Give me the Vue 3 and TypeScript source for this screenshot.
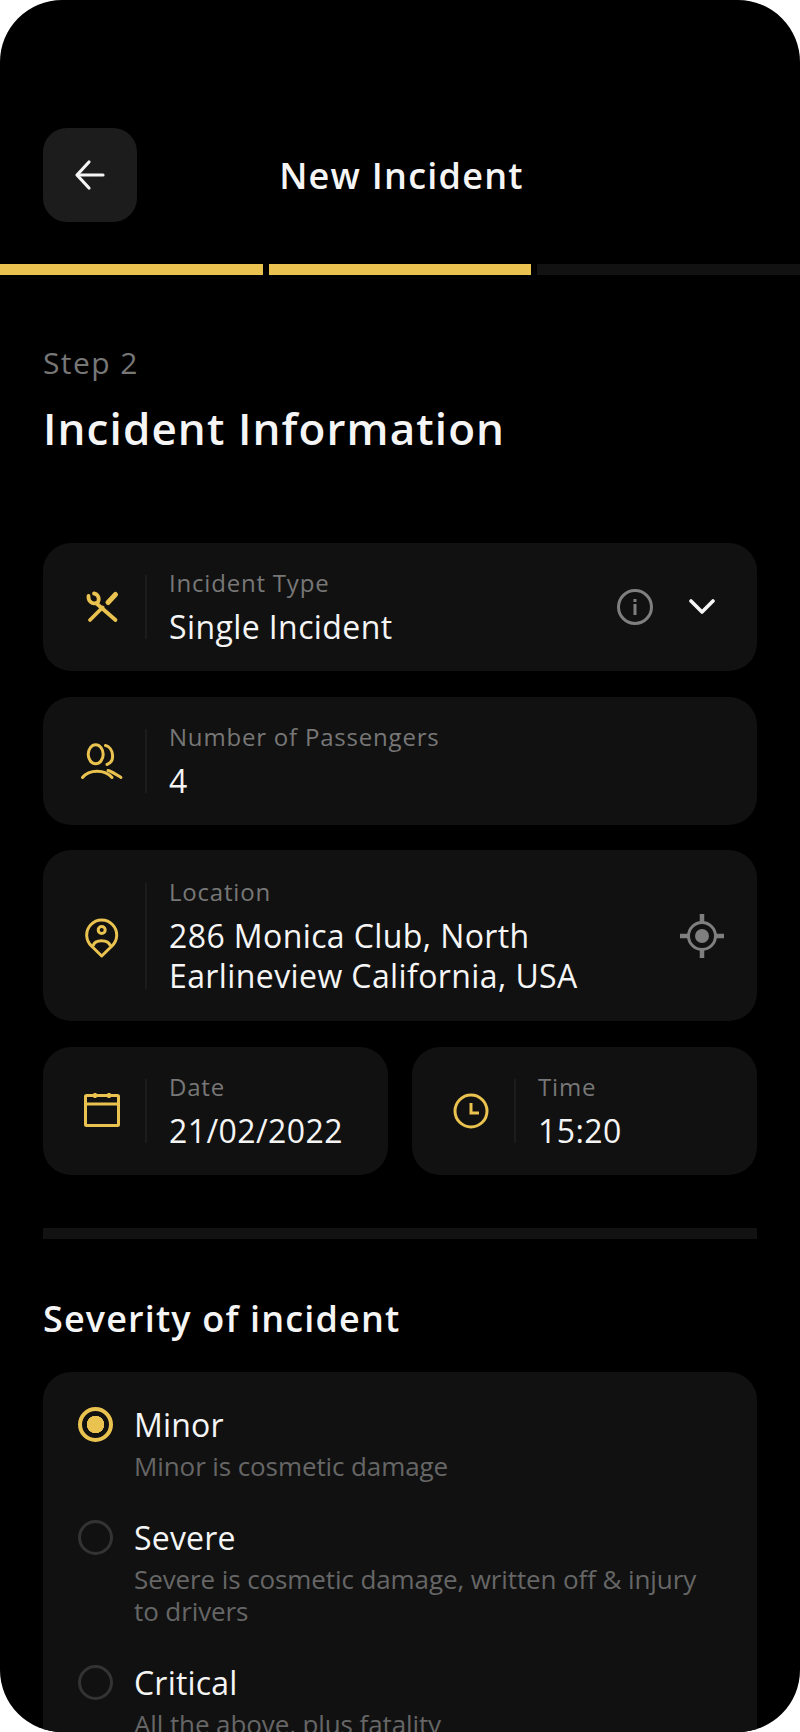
<script setup lang="ts">
interface Severity {
  name: string
  text: string
  checked: boolean
}

const severities: Severity[] = [
  { name: 'Minor', text: 'Minor is cosmetic damage', checked: true },
  { name: 'Severe', text: 'Severe is cosmetic damage, written off & injury to drivers', checked: false },
  { name: 'Critical', text: 'All the above, plus fatality', checked: false },
]
</script>

<template>
  <div class="screen">
    <header class="top">
      <button class="back" type="button">
        <svg width="34" height="34" viewBox="0 0 34 34" fill="none" stroke="#f5f5f5" stroke-width="3.2" stroke-linecap="round" stroke-linejoin="round">
          <path d="M30 17H5" />
          <path d="M16 4 4 17l12 13" />
        </svg>
      </button>
      <h1>New Incident</h1>
    </header>

    <div class="progress">
      <span class="on"></span>
      <span class="on"></span>
      <span></span>
    </div>

    <main class="content">
      <p class="step">Step 2</p>
      <h2>Incident Information</h2>

      <div class="fields">
        <div class="card">
          <span class="ico">
            <svg width="36" height="36" viewBox="13 9 36 36" fill="none" stroke="#e9c24f" stroke-width="3.800" stroke-linecap="round" stroke-linejoin="round">
              <path d="M17.500 16C17 21 21 24.500 25 23L44.500 40" />
              <path d="M23 13.500C26.500 14 29 18 27 22" />
              <path d="M19 40 31.500 27.500" />
              <path d="M37 22.500 44.500 14.500" stroke-width="5" />
            </svg>
          </span>
          <div class="text">
            <span class="label">Incident Type</span>
            <span class="value">Single Incident</span>
          </div>
          <svg class="info" width="36" height="36" viewBox="0 0 36 36" fill="none">
            <circle cx="18" cy="18" r="16.500" stroke="#7f7f7f" stroke-width="3" />
            <rect x="16.500" y="15" width="3" height="11" fill="#7f7f7f" />
            <rect x="16.500" y="10" width="3" height="3" fill="#7f7f7f" />
          </svg>
          <svg class="chev" width="26" height="18" viewBox="0 0 26 18" fill="none" stroke="#f5f5f5" stroke-width="3.600" stroke-linecap="round" stroke-linejoin="round">
            <path d="M2 3l11 11L24 3" />
          </svg>
        </div>

        <div class="card">
          <span class="ico">
            <svg width="46" height="40" viewBox="10 6 46 40" fill="none" stroke="#e9c24f" stroke-width="3" stroke-linecap="round">
              <ellipse cx="26.700" cy="19.300" rx="7.500" ry="9.500" />
              <path d="M36.500 10.500C44 12 47 26 38 29.500" />
              <path d="M13.500 42.500C20 34 36 34 43 42.500" />
              <path d="M39 35.500C44 37 48 40 52 42.500" />
            </svg>
          </span>
          <div class="text">
            <span class="label">Number of Passengers</span>
            <span class="value">4</span>
          </div>
        </div>

        <div class="card tall">
          <span class="ico">
            <svg width="36" height="44" viewBox="14 4 36 44" fill="none" stroke="#e9c24f" stroke-width="3" stroke-linejoin="round">
              <path d="M31.700 46 22 36.500A15 15 0 1 1 41.400 36.500Z" />
              <circle cx="31.700" cy="20" r="3.500" />
              <path d="M23 36C25 29 38 29 40.500 36" />
            </svg>
          </span>
          <div class="text">
            <span class="label">Location</span>
            <span class="value">286 Monica Club, North<br />Earlineview California, USA</span>
          </div>
          <svg class="target" width="44" height="44" viewBox="0 0 44 44" fill="none" stroke="#7f7f7f" stroke-width="3">
            <circle cx="22" cy="22" r="13.500" />
            <circle cx="22" cy="22" r="7" fill="#7f7f7f" stroke="none" />
            <path d="M22 0v9M22 35v9M0 22h9M35 22h9" stroke-width="4.500" />
          </svg>
        </div>

        <div class="pair">
          <div class="card">
            <span class="ico">
              <svg width="36" height="36" viewBox="0 2 36 36" fill="none" stroke="#e9c24f" stroke-width="3">
                <rect x="1.500" y="4.500" width="33" height="30" rx="1" />
                <path d="M1.500 13h33" />
                <path d="M11 1v6M25 1v6" />
              </svg>
            </span>
            <div class="text">
              <span class="label">Date</span>
              <span class="value">21/02/2022</span>
            </div>
          </div>
          <div class="card">
            <span class="ico">
              <svg width="36" height="36" viewBox="0 0 36 36" fill="none" stroke="#e9c24f" stroke-width="3">
                <circle cx="18" cy="18" r="16" />
                <path d="M18 10V20h8" />
              </svg>
            </span>
            <div class="text">
              <span class="label">Time</span>
              <span class="value">15:20</span>
            </div>
          </div>
        </div>
      </div>

      <div class="rule"></div>

      <h3>Severity of incident</h3>

      <div class="severity">
        <div v-for="s in severities" :key="s.name" class="option">
          <span class="radio" :class="{ checked: s.checked }"></span>
          <div class="opt-body">
            <div class="opt-name">{{ s.name }}</div>
            <div class="opt-text">{{ s.text }}</div>
          </div>
        </div>
      </div>
    </main>
  </div>
</template>

<style scoped>
.screen {
  width: 800px;
  height: 1732px;
  background: #000;
  border-radius: 62px;
  overflow: hidden;
  box-sizing: border-box;
  padding-top: 128px;
  font-family: "Open Sans", "Noto Sans", sans-serif;
  color: #f5f5f5;
}

.top {
  display: grid;
  grid-template-columns: 94px 1fr 94px;
  align-items: center;
  padding: 0 43px;
}

.back {
  width: 94px;
  height: 94px;
  background: #1c1c1c;
  border: 0;
  border-radius: 24px;
  padding: 0;
  display: flex;
  align-items: center;
  justify-content: center;
}

h1 {
  margin: 0;
  padding-left: 3px;
  font-size: 36px;
  font-weight: 600;
  letter-spacing: 1.25px;
  text-align: center;
}

.progress {
  display: grid;
  grid-template-columns: 263px 262px 1fr;
  column-gap: 6px;
  margin-top: 42px;
  height: 11px;
}

.progress span {
  background: #121212;
}

.progress .on {
  background: #e9c24f;
}

.content {
  padding: 0 43px;
}

.step {
  margin: 69px 0 0;
  font-size: 30px;
  line-height: 38px;
  letter-spacing: 1.4px;
  color: #777;
}

h2 {
  margin: 17px 0 0;
  font-size: 44px;
  line-height: 58px;
  font-weight: 600;
  letter-spacing: 1.1px;
}

.fields {
  display: flex;
  flex-direction: column;
  gap: 25.6px;
  margin-top: 86px;
}

.card {
  display: flex;
  align-items: center;
  min-height: 128px;
  background: #111;
  border-radius: 28px;
  box-sizing: border-box;
  padding-right: 36px;
}

.card.tall {
  min-height: 171px;
}

.ico {
  width: 104px;
  height: 64px;
  flex: none;
  display: flex;
  align-items: center;
  justify-content: center;
  padding-left: 15px;
  box-sizing: border-box;
  border-right: 2px solid #1c1c1c;
}

.tall .ico {
  height: 106px;
}

.text {
  flex: 1;
  display: flex;
  flex-direction: column;
  padding-left: 22px;
}

.label {
  font-size: 24px;
  line-height: 32px;
  letter-spacing: 0.8px;
  color: #777;
}

.value {
  margin-top: 8px;
  font-size: 32px;
  line-height: 40px;
  letter-spacing: 0.4px;
  color: #f5f5f5;
}

.info {
  margin-right: 36px;
}

.chev {
  margin-right: 6px;
}

.target {
  margin-right: -3px;
}

.pair {
  display: grid;
  grid-template-columns: 345px 345px;
  column-gap: 24px;
}

.rule {
  height: 11px;
  background: #121212;
  margin-top: 53px;
}

h3 {
  margin: 58px 0 0;
  font-size: 36px;
  line-height: 44px;
  font-weight: 600;
  letter-spacing: 1.15px;
}

.severity {
  margin-top: 31px;
  background: #111;
  border-radius: 28px;
  padding: 32px 35px 40px;
  height: 400px;
}

.option {
  display: flex;
  gap: 21px;
  margin-bottom: 35px;
}

.opt-body {
  width: 580px;
}

.radio {
  flex: none;
  width: 35px;
  height: 35px;
  margin-top: 3px;
  box-sizing: border-box;
  border: 3px solid #333;
  border-radius: 50%;
}

.radio.checked {
  border: 4px solid #e9c24f;
  background: radial-gradient(circle, #e9c24f 0 8.500px, transparent 9px);
}

.opt-name {
  font-size: 32px;
  line-height: 42px;
  letter-spacing: 0.2px;
}

.opt-text {
  margin-top: 4px;
  font-size: 26px;
  line-height: 32px;
  letter-spacing: -0.1px;
  color: #666;
}
</style>

<style>
html,
body {
  margin: 0;
  background: #fff;
}
</style>
